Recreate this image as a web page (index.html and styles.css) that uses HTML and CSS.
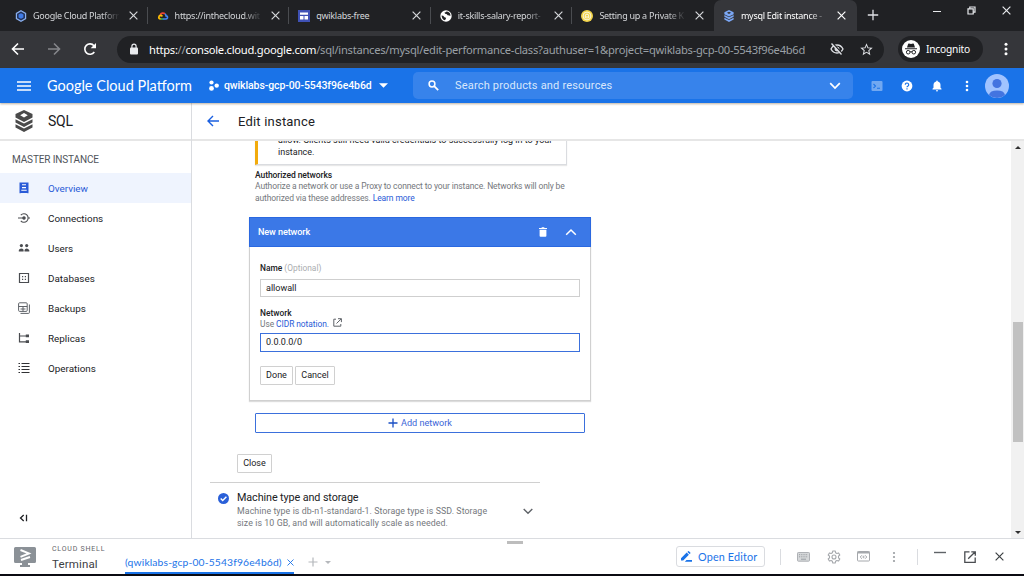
FILE: index.html
```html
<!DOCTYPE html>
<html lang="en">
<head>
<meta charset="utf-8">
<title>mysql Edit instance</title>
<link rel="stylesheet" href="styles.css">
</head>
<body>
<svg class="defs" aria-hidden="true">
  <symbol id="x" viewBox="0 0 10 10"><path d="M.7.7l8.6 8.6M9.3.7L.7 9.3" fill="none" stroke="currentColor" stroke-width="1.3"/></symbol>
  <symbol id="stack" viewBox="0 0 18 22"><path d="M9 0l8.500 4v3.600L9 12 .5 7.600V4zM9 3L5.200 5.200 9 7.400l3.800-2.200z" fill-rule="evenodd"/><path d="M.5 9.200L9 13.500l8.500-4.300v3.400L9 17 .5 12.600zM.5 14.200L9 18.500l8.500-4.300v3.400L9 22 .5 17.600z"/></symbol>
</svg>
<div class="window">
  <header class="tabstrip">
    <div class="tab">
      <svg class="favicon" viewBox="0 0 12 12"><path d="M6 .8l4.600 2.600v5.200L6 11.200 1.400 8.600V3.400z" fill="#23345c" stroke="#8ab0f0" stroke-width="1.200"/><path d="M6 3.300l2.400 1.300v2.800L6 8.700 3.600 7.400V4.600z" fill="#3f7be8"/></svg>
      <span class="tab-title fade">Google Cloud Platforr</span><svg class="tab-close"><use href="#x"/></svg>
    </div>
    <div class="tab">
      <svg class="favicon" viewBox="0 0 12 12" fill="none" stroke-width="1.700"><path d="M3.200 5A3 3 0 0 1 8 3.900" stroke="#ea4335"/><path d="M8 3.900Q9 4.600 9 5.800 10.800 6 10.400 8 10 9 8.600 9H6" stroke="#4285f4"/><path d="M6 9H3.400" stroke="#34a853"/><path d="M3.600 9Q1.600 8.600 1.800 7 2 5.400 4 5.400l1.500.8" stroke="#fbbc04"/></svg>
      <span class="tab-title fade">https://inthecloud.wit</span><svg class="tab-close"><use href="#x"/></svg>
    </div>
    <div class="tab">
      <svg class="favicon" viewBox="0 0 12 12"><path fill="#3f51b5" d="M0 0h12v12H0z"/><path d="M2 2.500h8v2.300H2zM2 6h3.500v3.500H2zM6.500 6H10v3.500H6.500z" fill="#fff"/></svg>
      <span class="tab-title">qwiklabs-free</span><svg class="tab-close"><use href="#x"/></svg>
    </div>
    <div class="tab">
      <svg class="favicon" viewBox="0 0 12 12"><circle cx="6" cy="6" r="5.700" fill="#fff"/><path d="M1.500 5.500q2 0 2.600 1.200.6 1 2 1-.2 1.800-1.300 2.600Q2 9.500 1.500 5.500zM6.500 1.400q-.8 1-2 1 .2 1.500 1.800 1.500 1 .2 1.200 1.300 1.500-.2 2.900.8.200-3.200-2.400-4.300z" fill="#202124"/></svg>
      <span class="tab-title fade">it-skills-salary-report-</span><svg class="tab-close"><use href="#x"/></svg>
    </div>
    <div class="tab last">
      <svg class="favicon" viewBox="0 0 12 12"><circle cx="6" cy="6" r="6" fill="#f2d34a"/><circle cx="6" cy="6" r="3.900" fill="none" stroke="#fff" stroke-width=".8"/><path d="M4.300 8.200V5.800a1.700 1.700 0 0 1 3.400 0v2.400M6 6v2.500" fill="none" stroke="#fff" stroke-width=".9"/></svg>
      <span class="tab-title fade">Setting up a Private K</span><svg class="tab-close"><use href="#x"/></svg>
    </div>
    <div class="tab active">
      <svg class="favicon stackicon"><use href="#stack"/></svg>
      <span class="tab-title fade">mysql Edit instance -</span><svg class="tab-close"><use href="#x"/></svg>
    </div>
    <svg class="newtab" viewBox="0 0 12 12"><path d="M6 .8v10.400M.8 6h10.400" stroke="#dfe1e5" stroke-width="1.300"/></svg>
    <div class="winctl">
      <svg width="8" height="10" viewBox="0 0 8 10"><path d="M0 5.500h8" stroke="#e8eaed"/></svg>
      <svg width="9" height="9" viewBox="0 0 9 9" fill="none" stroke="#e8eaed" stroke-width="1.200"><path d="M1 2.800h5.200V8H1z"/><path d="M2.800 2.800V1H8v5.200H6.200"/></svg>
      <svg width="9" height="9"><use href="#x"/></svg>
    </div>
  </header>

  <div class="toolbar">
    <div class="nav">
      <svg viewBox="0 0 14 14" fill="none" stroke="#fff" stroke-width="1.600"><path d="M13 7H1.800M7 1.500L1.500 7 7 12.500"/></svg>
      <svg viewBox="0 0 14 14" fill="none" stroke="#85868a" stroke-width="1.600"><path d="M1 7h11.200M7 1.500L12.500 7 7 12.500"/></svg>
      <svg viewBox="0 0 14 14"><path d="M11.300 10A5.200 5.200 0 1 1 11 3.700L12 5" fill="none" stroke="#fff" stroke-width="1.600"/><path d="M13 1v5.300H7.700z" fill="#fff"/></svg>
    </div>
    <div class="omnibox">
      <svg class="lock" viewBox="0 0 10 12"><rect x="1" y="4.500" width="8" height="7" rx="1" fill="#e8eaed"/><path d="M2.900 5V3.200a2.100 2.100 0 0 1 4.200 0V5" fill="none" stroke="#e8eaed" stroke-width="1.200"/></svg>
      <span class="url"><b>https:</b>//<b>console.cloud.google.com</b>/sql/instances/mysql/edit-performance-class?authuser=1&amp;project=qwiklabs-gcp-00-5543f96e4b6d</span>
      <svg class="eye" viewBox="0 0 14 12" fill="none" stroke="#dfe1e5"><path d="M1 6q2-4 6-4t6 4q-2 4-6 4T1 6z" stroke-width="1.300"/><circle cx="7" cy="6" r="2" fill="#dfe1e5"/><path d="M2.500 0l10 11" stroke="#202124" stroke-width="1.500"/><path d="M1.500.5l10 11" stroke-width="1.300"/></svg>
      <svg class="star" viewBox="0 0 24 24"><path d="M22 9.240l-7.190-.62L12 2 9.190 8.630 2 9.240l5.460 4.730L5.820 21 12 17.270 18.180 21l-1.630-7.030L22 9.240zM12 15.400l-3.760 2.270 1-4.280-3.320-2.880 4.380-.38L12 6.100l1.710 4.040 4.380.38-3.320 2.880 1 4.280L12 15.400z" fill="#dfe1e5"/></svg>
    </div>
    <div class="incognito">
      <svg viewBox="0 0 18 18"><circle cx="9" cy="9" r="9" fill="#fff"/><path d="M3 8.300h12v.9H3zM5 7.600l1.100-3.700q.2-.6.900-.4l2 .5 2-.5q.7-.2.900.4L13 7.600z" fill="#202124"/><g fill="none" stroke="#202124"><circle cx="6.200" cy="12.200" r="1.800"/><circle cx="11.800" cy="12.200" r="1.800"/><path d="M8 12q1-.7 2 0"/></g></svg>
      <span>Incognito</span>
    </div>
    <svg class="menu3" viewBox="0 0 4 14" fill="#fff"><circle cx="2" cy="2.200" r="1.500"/><circle cx="2" cy="7" r="1.500"/><circle cx="2" cy="11.800" r="1.500"/></svg>
  </div>

  <div class="gcp">
    <svg class="burger" viewBox="0 0 14 10"><path d="M0 1h14M0 5h14M0 9h14" stroke="#fff" stroke-width="1.500"/></svg>
    <span class="brand">Google Cloud Platform</span>
    <svg class="dots" viewBox="0 0 10 11" fill="#fff"><circle cx="2.500" cy="2.500" r="2.100"/><circle cx="2.500" cy="8.400" r="2.400"/><circle cx="7.700" cy="5.600" r="2.200"/></svg>
    <span class="project">qwiklabs-gcp-00-5543f96e4b6d</span>
    <svg class="caret" viewBox="0 0 8 4"><path d="M0 0h8L4 4z" fill="#fff"/></svg>
    <div class="search">
      <svg class="glass" viewBox="0 0 11 11"><circle cx="4" cy="4" r="2.900" fill="none" stroke="#fff" stroke-width="1.500"/><path d="M6.200 6.200l4 4" stroke="#fff" stroke-width="1.800"/></svg>
      <span>Search products and resources</span>
      <svg class="chev" viewBox="0 0 12 8"><path d="M1.200 1.200L6 6l4.800-4.800" fill="none" stroke="#fff" stroke-width="1.700"/></svg>
    </div>
    <div class="gicons">
      <svg width="12" height="12" viewBox="0 0 12 12"><rect x=".5" y="1" width="11" height="10" rx="1" fill="#71a8f1"/><path d="M2.500 4l2 2-2 2M6 8.200h3" fill="none" stroke="#1a73e8" stroke-width="1.100"/></svg>
      <svg width="12" height="12" viewBox="0 0 12 12"><circle cx="6" cy="6" r="5.400" fill="#fff"/><path d="M4.300 4.800a1.700 1.700 0 1 1 2.700 1.300q-1 .6-1 1.200M6 8.200v1.200" fill="none" stroke="#1a73e8" stroke-width="1.200"/></svg>
      <svg width="12" height="12" viewBox="0 0 12 12" fill="#fff"><path d="M1.500 9.500V8.800l1-1V5A3.500 3.500 0 0 1 5.200 1.600Q5.200.5 6 .5t.8 1.100A3.500 3.500 0 0 1 9.500 5v2.800l1 1v.7zM4.900 10.200h2.200Q7 11.500 6 11.500t-1.100-1.300z"/></svg>
      <svg width="12" height="12" viewBox="0 0 12 12" fill="#fff"><circle cx="6" cy="2" r="1.300"/><circle cx="6" cy="6" r="1.300"/><circle cx="6" cy="10" r="1.300"/></svg>
    </div>
    <svg class="avatar" viewBox="0 0 24 24"><circle cx="12" cy="12" r="12" fill="#a0c3ff"/><circle cx="12" cy="9.500" r="4.600" fill="#4374e0"/><path d="M4 20.900Q5 16.500 12 16.500t8 4.400A12 12 0 0 1 4 20.900z" fill="#4374e0"/></svg>
  </div>

  <div class="content">
    <aside class="sidebar">
      <div class="side-head"><svg class="sqlicon"><use href="#stack"/></svg><span>SQL</span></div>
      <div class="side-label">MASTER INSTANCE</div>
      <a class="item selected"><svg viewBox="0 0 12 12"><path d="M1.500.5h9v10.800H9.300V11H2.700v.3H1.500z" fill="#2a5bd7"/><path d="M4 2.800h4M4 5.600h4M3.300 8.300h5.400" stroke="#fff" stroke-width="1.100"/></svg><span>Overview</span></a>
      <a class="item"><svg viewBox="0 0 12 12" fill="none" stroke="#4a4c50" stroke-width="1.100"><path d="M0 6h6M9.500 6H12M2.800 3.200A4.200 4.200 0 1 1 2.800 8.800"/><circle cx="6" cy="6" r="1.200" fill="#4a4c50"/></svg><span>Connections</span></a>
      <a class="item"><svg viewBox="0 0 12 12" fill="#4a4c50"><circle cx="3.400" cy="3.600" r="1.600"/><circle cx="8.700" cy="3.600" r="1.600"/><path d="M.8 9.500V8.300Q1.200 6.500 3.400 6.500T5.600 8v1.500zM6.500 9.500V8Q7 6.500 8.700 6.500t2.600 1.800v1.200z"/></svg><span>Users</span></a>
      <a class="item"><svg viewBox="0 0 12 12"><path d="M1.500 1.500h9v9h-9z" fill="none" stroke="#4a4c50" stroke-width="1.200"/><path d="M4 4h1.200v1.200H4zM6.800 4H8v1.200H6.800zM4 6.800h1.200V8H4zM6.800 6.800H8V8H6.800z" fill="#4a4c50"/></svg><span>Databases</span></a>
      <a class="item"><svg viewBox="0 0 12 12" fill="none" stroke="#5f6368"><rect x=".6" y=".8" width="8.600" height="8.600" rx="1"/><path d="M.6 4.500h8.600M5 4.500v5M2.500 7h5M11.400 2.500v8q0 .9-.9.900h-8"/></svg><span>Backups</span></a>
      <a class="item"><svg viewBox="0 0 12 12" stroke="#4a4c50" fill="none" stroke-width="1.200"><path d="M1.500 1v8.800H9M1.500 4H9"/><path d="M7.800 2.500H11v2.800H7.800zM7.800 8.200H11V11H7.800z" fill="#4a4c50" stroke="none"/></svg><span>Replicas</span></a>
      <a class="item"><svg viewBox="0 0 12 12" stroke="#303134" stroke-width="1.100"><path d="M0.500 1.500h1.500M3.500 1.500h8M0.500 4.500h1.500M3.500 4.500h8M0.500 7.500h1.500M3.500 7.500h8M0.500 10.500h1.500M3.500 10.500h8"/></svg><span>Operations</span></a>
      <svg class="collapse" viewBox="0 0 9 8"><path d="M4.700 1L1.500 4l3.200 3M7.500.7v6.600" fill="none" stroke="#202124" stroke-width="1.300"/></svg>
    </aside>
    <main class="main">
      <div class="main-head">
        <svg viewBox="0 0 12 12" fill="none" stroke="#1a5fe0" stroke-width="1.400"><path d="M12 6H1.500M6 1L1 6l5 5"/></svg>
        <span>Edit instance</span>
      </div>
      <div class="scroller">
        <div class="form">
          <div class="notice"><div class="n1">allow. Clients still need valid credentials to successfully log in to your</div><div class="n2">instance.</div></div>
          <div class="auth">
            <div class="b">Authorized networks</div>
            <div class="d1">Authorize a network or use a Proxy to connect to your instance. Networks will only be</div>
            <div class="d2">authorized via these addresses. <a>Learn more</a></div>
          </div>
          <section class="card">
            <div class="card-head"><span>New network</span>
              <svg class="trash" viewBox="0 0 8 10" fill="#fff"><path d="M0 1h2.400l.5-.8h2.200l.5.800H8v1H0zM.6 2.800h6.800v6q0 .9-.9.900h-5q-.9 0-.9-.9z"/></svg>
              <svg class="up" viewBox="0 0 12 8"><path d="M1.200 6.800L6 2l4.800 4.800" fill="none" stroke="#fff" stroke-width="1.500"/></svg>
            </div>
            <div class="card-body">
              <div class="lbl name"><b>Name</b> <span>(Optional)</span></div>
              <div class="input">allowall</div>
              <div class="lbl net"><b>Network</b></div>
              <div class="hint"><span>Use <a>CIDR notation.</a></span><svg viewBox="0 0 9 9" fill="none" stroke="#5f6368"><path d="M3 1.200H.8v7h7V6M5 .7h3.400v3.400M8.200.9L3.500 5.500"/></svg></div>
              <div class="input focus">0.0.0.0/0</div>
              <div class="btns"><button>Done</button><button>Cancel</button></div>
            </div>
          </section>
          <button class="add"><svg viewBox="0 0 10 10"><path d="M5 .5v9M.5 5h9" stroke="#1a4fc4" stroke-width="1.300"/></svg><span>Add network</span></button>
          <button class="close">Close</button>
          <section class="machine">
            <svg class="check" viewBox="0 0 11 11"><circle cx="5.500" cy="5.500" r="5.500" fill="#2a60d8"/><path d="M2.700 5.600l2 2 3.700-3.800" fill="none" stroke="#fff" stroke-width="1.400"/></svg>
            <div class="mtext"><div class="mtitle">Machine type and storage</div>
              <div class="m1">Machine type is db-n1-standard-1. Storage type is SSD. Storage</div>
              <div class="m2">size is 10 GB, and will automatically scale as needed.</div></div>
            <svg class="mchev" viewBox="0 0 10 7"><path d="M.7 1L5 5.300 9.300 1" fill="none" stroke="#5f6368" stroke-width="1.400"/></svg>
          </section>
          <div class="endline"></div>
        </div>
        <div class="scrollbar">
          <svg viewBox="0 0 6 3"><path d="M0 3h6L3 0z" fill="#303030"/></svg>
          <div class="thumb"></div>
          <svg class="down" viewBox="0 0 6 3"><path d="M0 0h6L3 3z" fill="#303030"/></svg>
        </div>
      </div>
    </main>
  </div>

  <footer class="shell">
    <svg class="term" viewBox="0 0 22 20"><path d="M1.500 0h19Q22 0 22 1.500v13q0 1.500-1.500 1.500H14v2h2v2H6v-2h2v-2H1.500Q0 16 0 14.500v-13Q0 0 1.500 0z" fill="#8b9197"/><path d="M6.500 3l8.500 3.400-8.500 3.400M7 13l9-3" fill="none" stroke="#fff" stroke-width="1.900"/></svg>
    <div class="shell-title"><div class="cs">CLOUD SHELL</div><div class="tm">Terminal</div></div>
    <div class="shell-tab"><span>(qwiklabs-gcp-00-5543f96e4b6d)</span><svg width="7" height="7"><use href="#x"/></svg></div>
    <svg class="plus" viewBox="0 0 10 10"><path d="M5 .5v9M.5 5h9" stroke="#b5b8bc" stroke-width="1.200"/></svg>
    <svg class="tcaret" viewBox="0 0 6 3"><path d="M0 0h6L3 3z" fill="#b5b8bc"/></svg>
    <div class="grip"></div>
    <button class="editor"><svg viewBox="0 0 11 11" fill="#1a73e8"><path d="M0 7.300L5.700 1.600l2.200 2.200L2.200 9.500H0zM6.400.9l.7-.7q.4-.3.800 0l1.400 1.400q.3.400 0 .8l-.7.700zM5.500 9H11v1.700H3.800z"/></svg><span>Open Editor</span></button>
    <i class="vr v1"></i>
    <div class="sicons">
      <svg width="13" height="10" viewBox="0 0 13 10"><rect x=".5" y=".5" width="12" height="8.700" rx=".8" fill="#d6d8da" stroke="#aeb1b5"/><path d="M2 2.700h9M2 4.800h9" stroke="#999da1" stroke-dasharray="1 .8"/><path d="M4 7.200h5" stroke="#999da1"/></svg>
      <svg width="14" height="14" viewBox="0 0 14 14" fill="none" stroke="#a5a8ac" stroke-width="1.100" stroke-linejoin="round"><path d="M5.800 1h2.400l.4 1.700 1.300.8 1.700-.6 1.200 2.100-1.300 1.200v1.600l1.300 1.200-1.200 2.100-1.700-.6-1.300.8L8.200 13H5.800l-.4-1.700-1.300-.8-1.700.6L1.200 9l1.300-1.200V6.200L1.200 5l1.200-2.100 1.700.6 1.300-.8z"/><circle cx="7" cy="7" r="2"/></svg>
      <svg width="13" height="11" viewBox="0 0 13 11" fill="none" stroke="#a5a8ac"><rect x=".5" y=".5" width="12" height="9.500" rx=".8"/><path d="M.5 1.500h12" stroke-width="2"/><path d="M5 4.200L3.200 6 5 7.800M8 4.200L9.800 6 8 7.800"/><circle cx="6.500" cy="6" r=".7"/></svg>
      <svg class="more" width="4" height="12" viewBox="0 0 4 12" fill="#999da1"><circle cx="2" cy="2" r="1.100"/><circle cx="2" cy="6" r="1.100"/><circle cx="2" cy="10" r="1.100"/></svg>
    </div>
    <i class="vr v2"></i>
    <div class="sctl">
      <svg width="12" height="12" viewBox="0 0 12 12"><path d="M0 3.500h12" stroke="#5f6368" stroke-width="1.400"/></svg>
      <svg width="12" height="12" viewBox="0 0 12 12" fill="none" stroke="#4a4d51" stroke-width="1.300"><path d="M5.500.9H.8v10.400h10.400V6.500M7.300.8h4v4M11 1L4.200 7.800"/></svg>
      <svg width="9" height="9"><use href="#x"/></svg>
    </div>
  </footer>
  <div class="taskbar"></div>
</div>
</body>
</html>
```
FILE: styles.css
```css
* { box-sizing: border-box; }
body { margin: 0; font-family: Roboto, "Liberation Sans", sans-serif; color: #202124; overflow: hidden; }
svg { flex: none; display: block; }
button { font: inherit; padding: 0; margin: 0; background: #fff; white-space: nowrap; }
.defs { position: absolute; width: 0; height: 0; }
.window { width: 1024px; height: 576px; display: flex; flex-direction: column; background: #fff; }
.window span, .window div { white-space: nowrap; }

.tabstrip { height: 31px; flex: none; display: flex; background: #202124; padding-left: 6px; font-family: "Noto Sans", sans-serif; }
.tab { width: 141.6px; height: 31px; flex: none; display: flex; align-items: center; padding-left: 9px; color: #d5d7da; font-size: 9px; letter-spacing: -.27px; background: linear-gradient(#4a4c50, #4a4c50) 100% 7px / 1px 17px no-repeat; }
.tab.last { background: none; }
.tab.active { background: #35363a; border-radius: 7px 7px 0 0; color: #fff; width: 143px; }
.favicon { width: 12px; height: 12px; margin-right: 6px; }
.stackicon { fill: #7ba7f5; }
.tab-title { width: 86px; line-height: 16px; }
.fade { -webkit-mask-image: linear-gradient(90deg, #000 68px, transparent 87px); mask-image: linear-gradient(90deg, #000 68px, transparent 87px); }
.tab-close { width: 9px; height: 9px; margin-left: 10px; color: #d5d7da; }
.active .tab-close { color: #fff; }
.newtab { width: 12px; height: 12px; margin: 9px 0 0 10px; }
.winctl { flex: 1; display: flex; justify-content: flex-end; align-items: center; gap: 26px; height: 21px; padding-right: 13px; color: #e8eaed; }

.toolbar { height: 37px; flex: none; display: flex; align-items: center; background: #35363a; font-family: "Noto Sans", sans-serif; padding-bottom: 1px; }
.nav { width: 117px; display: flex; gap: 22px; padding-left: 11px; }
.nav svg { width: 14px; height: 14px; }
.omnibox { width: 767px; height: 27px; border-radius: 14px; background: #202124; display: flex; align-items: center; padding-left: 12px; }
.lock { width: 10px; height: 12px; margin-right: 10px; }
.url { width: 681px; font-size: 11.200px; letter-spacing: -.27px; color: #9aa0a6; }
.url b { font-weight: 400; color: #fff; }
.eye { width: 14px; height: 12px; margin-right: 15px; }
.star { width: 15px; height: 15px; }
.incognito { width: 85px; height: 26px; margin-left: 14px; border-radius: 13px; background: #202124; display: flex; align-items: center; padding-left: 4px; gap: 6px; color: #fff; font-size: 10.200px; letter-spacing: -.2px; }
.incognito svg { width: 18px; height: 18px; }
.menu3 { width: 4px; height: 14px; margin-left: 21px; }

.gcp { height: 35px; flex: none; display: flex; align-items: center; background: #1a73e8; padding-left: 17px; color: #fff; z-index: 1; box-shadow: 0 1px 2px rgba(90, 60, 20, .4); }
.burger { width: 14px; height: 10px; margin-right: 16px; }
.brand { width: 162px; font-family: Lato, sans-serif; font-size: 14.500px; }
.dots { width: 10px; height: 11px; margin-right: 5px; }
.project { width: 155px; font-size: 10.500px; font-weight: 500; letter-spacing: -.1px; }
.caret { width: 9px; height: 5px; }
.search { width: 440px; height: 27px; margin-left: 25px; border-radius: 5px; background: #3783eb; display: flex; align-items: center; padding-left: 15px; color: #d9e7fc; font-size: 11px; letter-spacing: .19px; }
.search span { width: 375px; padding-left: 16px; }
.glass { width: 11px; height: 11px; }
.chev { width: 12px; height: 8px; margin-left: 15px; }
.gicons { display: flex; gap: 18px; margin-left: 18px; }
.avatar { width: 24px; height: 24px; margin-left: 12px; }

.content { height: 435px; flex: none; display: flex; }
.sidebar { width: 192px; border-right: 1px solid #dadce0; display: flex; flex-direction: column; }
.side-head { height: 38px; flex: none; border-bottom: 2px solid #e6e6e6; display: flex; align-items: center; padding-left: 15px; gap: 15px; font-size: 14px; letter-spacing: -.2px; }
.sqlicon { width: 18px; height: 22px; fill: #4a4a4a; }
.side-label { height: 32px; padding: 0 12px; line-height: 37px; font-size: 10px; letter-spacing: -.13px; color: #50545a; }
.item { height: 30px; display: flex; align-items: center; padding-left: 18px; gap: 18px; font-size: 9.900px; }
.item svg { width: 12px; height: 12px; }
.selected { background: #eff4fe; color: #2a5bd7; }
.collapse { width: 9px; height: 8px; margin: auto 0 16px 19px; }

.main { flex: 1; display: flex; flex-direction: column; }
.main-head { height: 38px; flex: none; border-bottom: 2px solid #e6e6e6; display: flex; align-items: center; padding-left: 15px; gap: 19px; font-size: 13px; letter-spacing: .2px; }
.main-head svg { width: 12px; height: 12px; }
.scroller { height: 397px; display: flex; justify-content: space-between; overflow: hidden; }
.form { width: 420px; display: flex; flex-direction: column; align-items: flex-start; font-size: 8.500px; line-height: 12px; }
.form a { color: #2a5bd7; }
.notice { width: 312px; height: 32px; flex: none; margin: -8px 0 0 63px; padding: 0 0 0 20px; border: 1px solid #dadce0; border-left: 3px solid #f2ab0c; box-shadow: 0 1px 1px #e8e8e8; font-size: 9px; }
.auth { margin: 4px 0 0 63px; height: 36px; color: #74777c; letter-spacing: -.12px; }
.auth .b { color: #202124; font-weight: 500; height: 10.500px; letter-spacing: -.08px; }
.card { width: 342px; height: 184px; flex: none; margin: 13px 0 0 57px; border: 1px solid #d0d0d0; border-top: 0; box-shadow: 0 1px 1px #ddd; }
.card-head { height: 30px; margin: 0 -1px; background: #3b78e7; border: 1px solid #2a68e0; color: #fff; display: flex; align-items: center; padding-left: 8px; font-size: 9.100px; font-weight: 500; letter-spacing: -.1px; }
.card-head span { width: 281px; }
.trash { width: 8px; height: 10px; }
.up { width: 12px; height: 8px; margin-left: 18px; }
.card-body { padding: 15px 10px 0; }
.lbl { height: 12px; color: #202124; font-size: 8.400px; }
.lbl b { font-weight: 500; }
.lbl span { color: #abadb0; }
.input { width: 320px; height: 18px; margin-top: 5px; border: 1px solid #cfcfcf; padding-left: 5px; line-height: 16px; font-size: 9px; }
.net { margin-top: 10.500px; height: 10.500px; }
.hint { height: 12px; display: flex; gap: 4px; color: #74777c; font-size: 8.400px; letter-spacing: -.05px; }
.hint svg { width: 9px; height: 9px; }
.input.focus { height: 19px; margin-top: 3px; border-color: #3b70dc; }
.btns { display: flex; gap: 2px; margin-top: 14px; }
.btns button, .close { height: 19px; border: 1px solid #d0d0d0; border-radius: 1px; font-size: 9px; color: #202124; }
.btns button { width: 33px; }
.btns button + button { width: 40px; }
.add { width: 330px; height: 20px; flex: none; margin: 12px 0 0 63px; border: 1px solid #3b70dc; border-radius: 1px; color: #3b66d8; font-size: 9.100px; display: flex; align-items: center; justify-content: center; gap: 3px; }
.add svg { width: 10px; height: 10px; }
.close { width: 35px; flex: none; margin: 21px 0 0 45px; }
.machine { width: 330px; height: 56px; flex: none; margin: 9px 0 0 18px; border-top: 1px solid #d0d0d0; display: flex; }
.check { width: 11px; height: 11px; margin: 10px 8px 0 8px; }
.mtext { width: 286px; padding-top: 8px; font-size: 8.800px; letter-spacing: .08px; color: #74777c; }
.mtitle { height: 14.500px; line-height: 14px; font-size: 10.800px; letter-spacing: -.1px; color: #202124; }
.mchev { width: 10px; height: 7px; margin-top: 25px; }
.endline { width: 330px; height: 1px; flex: none; margin-left: 18px; background: #c8c8c8; }
.scrollbar { width: 13px; background: #f1f1f1; display: flex; flex-direction: column; align-items: center; padding: 5px 1px 4px 2px; }
.scrollbar svg { width: 6px; height: 3px; }
.thumb { width: 10px; height: 120px; background: #c1c1c1; margin-top: 173px; }
.down { margin-top: auto; }

.shell { height: 36px; flex: none; border-top: 1px solid #dadce0; display: flex; align-items: center; padding-left: 14px; position: relative; background: #fff; }
.term { width: 22px; height: 20px; }
.shell-title { width: 74px; margin-left: 15px; padding: 2px 0 0 1px; color: #5f6368; }
.cs { font-size: 7px; line-height: 12px; letter-spacing: .8px; }
.tm { font-size: 11.500px; line-height: 18px; letter-spacing: .15px; color: #3c4043; }
.shell-tab { width: 169px; height: 35px; display: flex; align-items: center; justify-content: space-between; padding-top: 13px; border-bottom: 2px solid #1a73e8; font-family: Lato, sans-serif; font-size: 10.300px; letter-spacing: .15px; color: #1a73e8; }
.plus { width: 10px; height: 10px; margin: 11px 0 0 14px; }
.tcaret { width: 6px; height: 3px; margin: 11px 0 0 7px; }
.grip { position: absolute; left: 507px; top: 2px; width: 16px; height: 3px; background: #bdbdbd; }
.editor { width: 89px; height: 21px; margin-left: 345px; border: 1px solid #dadce0; border-radius: 3px; color: #1a73e8; font-family: Lato, sans-serif; font-size: 10.800px; letter-spacing: .15px; display: flex; align-items: center; padding-left: 4px; gap: 6px; }
.editor svg { width: 11px; height: 11px; }
.vr { width: 1px; height: 16px; background: #dadce0; }
.v1 { margin-left: 15px; }
.sicons { display: flex; align-items: center; gap: 16.500px; margin-left: 16px; }
.more { margin-left: 5px; }
.v2 { margin-left: 21px; }
.sctl { display: flex; align-items: center; gap: 18px; margin-left: 16px; color: #3c4043; }
.sctl svg:first-child { margin-top: -4px; }
.sctl svg:last-child { margin-left: 1.500px; }
.taskbar { height: 2px; background: #0b0b12; }
```
